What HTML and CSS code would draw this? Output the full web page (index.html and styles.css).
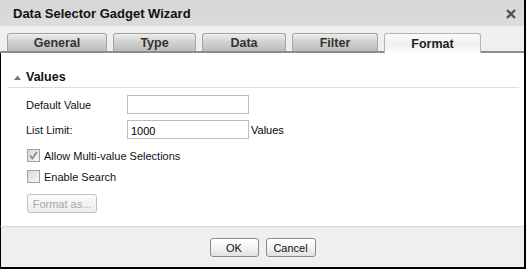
FILE: index.html
```html
<!DOCTYPE html>
<html>
<head>
<meta charset="utf-8">
<link rel="stylesheet" href="styles.css">
</head>
<body>
<div class="dialog">
  <div class="titlebar">
    <span class="title">Data Selector Gadget Wizard</span>
    <svg class="close" width="10" height="10" viewBox="0 0 10 10"><path d="M1 1 L9 9 M9 1 L1 9" stroke="#555" stroke-width="2.4" fill="none"/></svg>
  </div>
  <div class="tabs">
    <div class="tab t-general">General</div>
    <div class="tab t-type">Type</div>
    <div class="tab t-data">Data</div>
    <div class="tab t-filter">Filter</div>
    <div class="tab t-format active">Format</div>
  </div>
  <div class="content">
    <div class="section-head">
      <svg class="tri" width="7" height="5" viewBox="0 0 7 5"><path d="M0 5 L3.5 0.5 L7 5 Z" fill="#777"/></svg>
      <span class="section-title">Values</span>
    </div>
    <div class="row r1">
      <span class="label">Default Value</span>
      <span class="input"></span>
    </div>
    <div class="row r2">
      <span class="label">List Limit:</span>
      <span class="input">1000</span>
      <span class="suffix">Values</span>
    </div>
    <div class="check c1">
      <span class="box"><svg width="11" height="11" viewBox="0 0 11 11"><path d="M2 5.5 L4.3 8.5 L9 2" stroke="#8a8a8a" stroke-width="1.8" fill="none"/></svg></span>
      <span class="clabel">Allow Multi-value Selections</span>
    </div>
    <div class="check c2">
      <span class="box"></span>
      <span class="clabel">Enable Search</span>
    </div>
    <div class="fmt-btn">Format as...</div>
  </div>
  <div class="footer">
    <div class="btn ok">OK</div>
    <div class="btn cancel">Cancel</div>
  </div>
</div>
</body>
</html>
```
FILE: styles.css
```css
html, body {
  margin: 0;
  padding: 0;
  background: #fff;
}
body {
  font-family: "Liberation Sans", Arial, sans-serif;
  font-size: 11px;
  color: #000;
}
.dialog {
  width: 526px;
  height: 269px;
  box-sizing: border-box;
  border-right: 2px solid #000;
  border-bottom: 2px solid #000;
  display: flex;
  flex-direction: column;
  overflow: hidden;
}
.titlebar {
  height: 26px;
  flex: none;
  background: linear-gradient(#d6d6d6, #dcdcdc);
  display: flex;
  align-items: center;
  padding-left: 13px;
  padding-right: 8px;
}
.title {
  font-weight: bold;
  font-size: 13px;
  color: #111;
  flex: 1;
  padding-top: 1px;
}
.close {
  margin-top: 1px;
}
.tabs {
  height: 27px;
  flex: none;
  box-sizing: border-box;
  background: #efefef;
  border-bottom: 2px solid #8c8c8c;
  display: flex;
  align-items: flex-end;
  padding-left: 7px;
  gap: 6px;
}
.tab {
  height: 18px;
  box-sizing: border-box;
  border: 1px solid #a4a4a4;
  border-bottom: none;
  border-radius: 3px 3px 0 0;
  background: linear-gradient(#ededed, #d2d2d2 45%, #bcbcbc);
  font-weight: bold;
  font-size: 12.5px;
  color: #333;
  display: flex;
  justify-content: center;
  align-items: center;
  padding-top: 1px;
}
.t-general { width: 100px; }
.t-type { width: 83px; }
.t-data { width: 84px; }
.t-filter { width: 86px; }
.t-format { width: 97px; }
.tab.active {
  height: 20px;
  margin-bottom: -2px;
  background: linear-gradient(#fafafa, #f0f0f0 60%, #ffffff);
  border-color: #b4b4b4;
  color: #222;
}
.content {
  flex: 1;
  background: #fff;
  border-left: 1px solid #000;
  padding-top: 15px;
  display: flex;
  flex-direction: column;
}
.section-head {
  height: 20px;
  box-sizing: border-box;
  margin: 0 5px 0 7px;
  border-bottom: 1px solid #dcdcdc;
  display: flex;
  align-items: center;
  padding-left: 6px;
  padding-bottom: 1px;
}
.tri {
  margin-right: 5px;
}
.section-title {
  font-weight: bold;
  font-size: 12.5px;
  color: #111;
}
.row {
  display: flex;
  align-items: center;
  padding-left: 25px;
  height: 19px;
}
.r1 { margin-top: 7px; }
.r2 { margin-top: 6px; }
.label {
  width: 101px;
  color: #111;
}
.input {
  width: 122px;
  height: 19px;
  box-sizing: border-box;
  border: 1px solid #bdbdbd;
  background: #fff;
  font-size: 11px;
  padding: 4px 0 0 3px;
  line-height: 13px;
}
.suffix {
  margin-left: 2px;
}
.check {
  display: flex;
  align-items: center;
  padding-left: 26px;
  height: 13px;
}
.c1 { margin-top: 10px; }
.c2 { margin-top: 8px; }
.box {
  width: 13px;
  height: 13px;
  box-sizing: border-box;
  border: 1px solid #a0a0a0;
  background: linear-gradient(135deg, #d8d8d8, #f6f6f6);
  display: flex;
  align-items: center;
  justify-content: center;
}
.clabel {
  margin-left: 4px;
  color: #111;
}
.fmt-btn {
  margin-top: 11px;
  margin-left: 26px;
  width: 70px;
  height: 19px;
  box-sizing: border-box;
  border: 1px solid #c2c2c2;
  border-radius: 3px;
  background: linear-gradient(#fbfbfb, #ececec);
  color: #a8a8a8;
  display: flex;
  align-items: center;
  justify-content: center;
}
.footer {
  height: 41px;
  flex: none;
  box-sizing: border-box;
  background: #efefef;
  border-top: 1px solid #d6d6d6;
  border-left: 1px solid #000;
  display: flex;
  justify-content: center;
  gap: 7px;
  padding-top: 11px;
}
.btn {
  height: 19px;
  box-sizing: border-box;
  border: 1px solid #8a8a8a;
  border-radius: 3px;
  background: linear-gradient(#ffffff, #f3f3f3 50%, #e2e2e2);
  display: flex;
  align-items: center;
  justify-content: center;
  color: #111;
}
.ok { width: 49px; }
.cancel { width: 50px; }
```
